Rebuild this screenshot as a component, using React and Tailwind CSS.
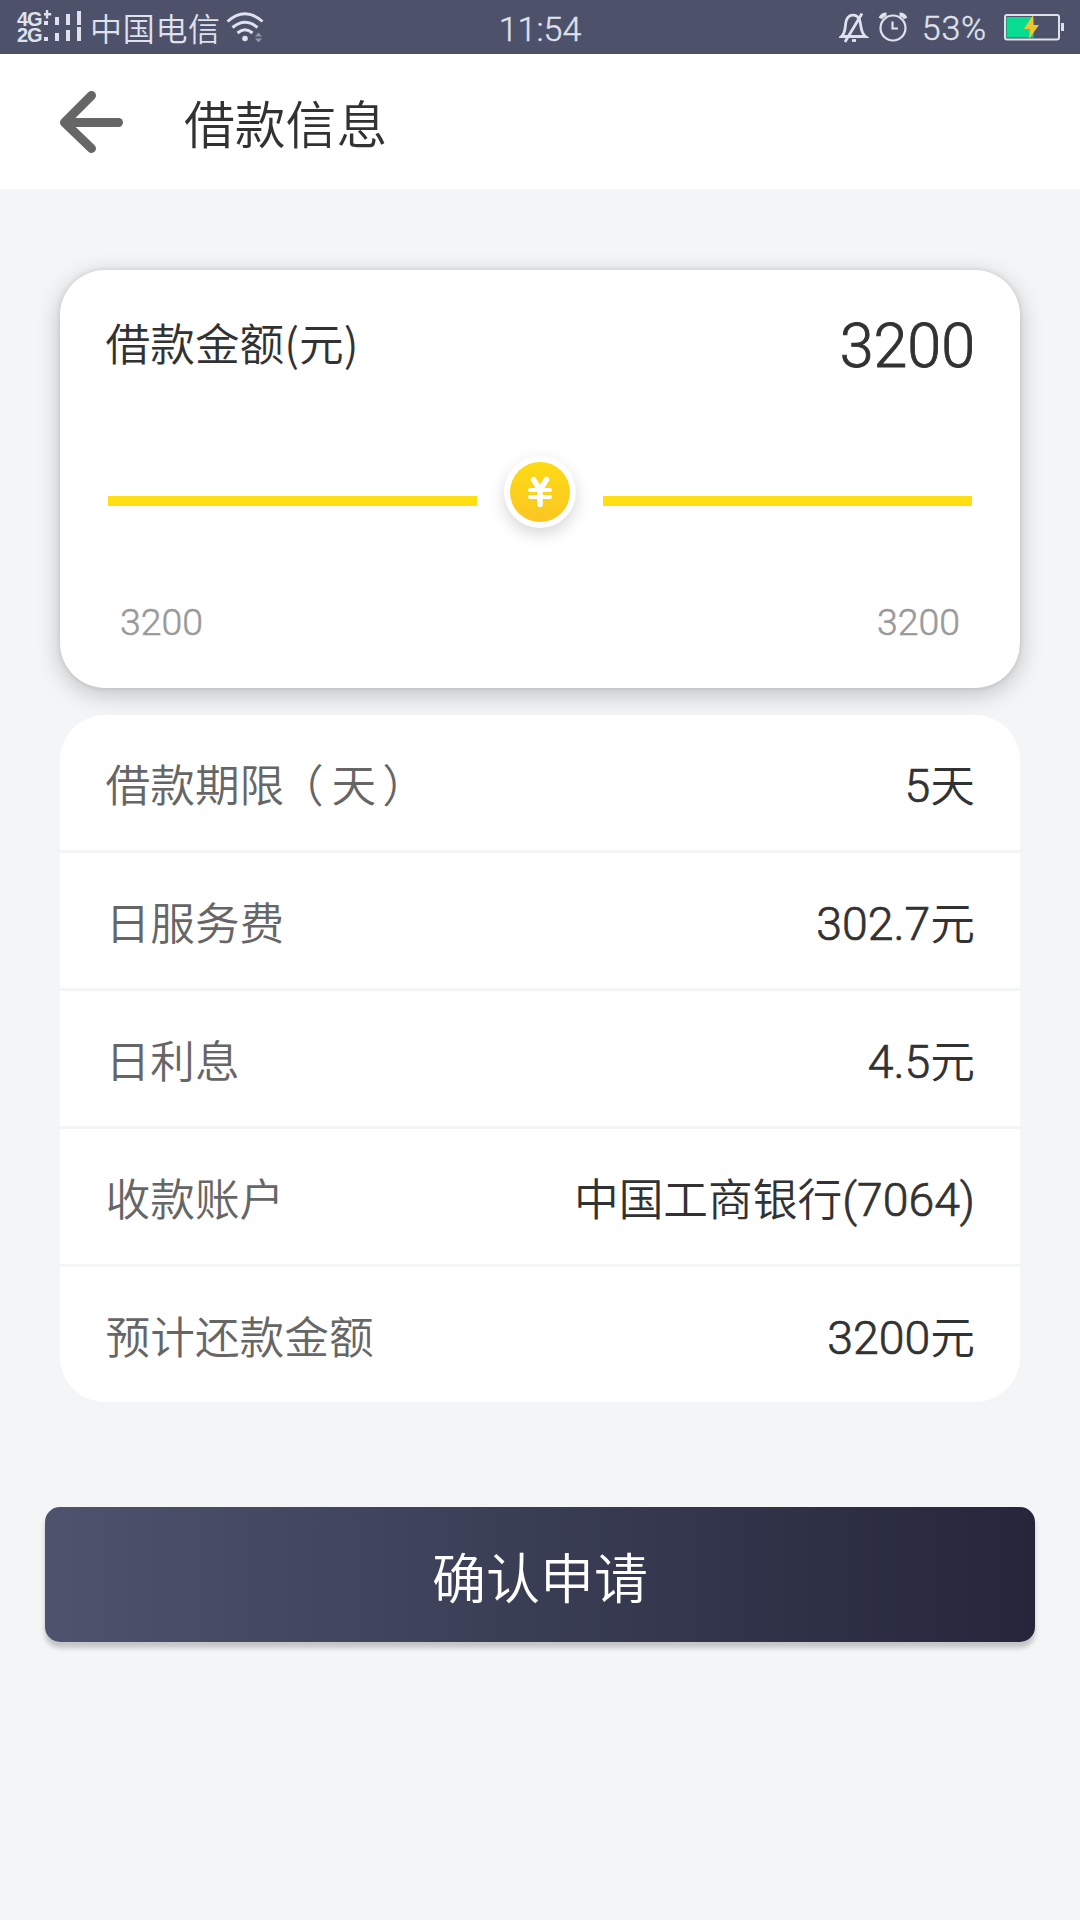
const rows = [
    { label: "借款期限", suffix: "天", value: "5", unit: "天" },
    { label: "日服务费", value: "302.7", unit: "元" },
    { label: "日利息", value: "4.5", unit: "元" },
    { label: "收款账户", prefix: "中国工商银行", value: "(7064)" },
    { label: "预计还款金额", value: "3200", unit: "元" },
];

function SignalBars() {
    return (
        <svg width="38" height="34" viewBox="0 0 38 34" fill="#dfe2ec">
            <path d="M1.800 0H4.200V3H7.200V5.400H4.200V8.400H1.800V5.400H-1.200V3H1.800z" />
            <rect x="0" y="11" width="4" height="4" />
            <rect x="11" y="7" width="4" height="8" />
            <rect x="22" y="4" width="4" height="11" />
            <rect x="33" y="1" width="4" height="14" />
            <rect x="0" y="27" width="4" height="4" />
            <rect x="11" y="23" width="4" height="8" />
            <rect x="22" y="20" width="4" height="11" />
            <rect x="33" y="17" width="4" height="14" />
        </svg>
    );
}

function WifiIcon() {
    return (
        <svg width="38" height="32" viewBox="0 0 38 32" fill="none" stroke="#dfe2ec" strokeWidth="3">
            <path d="M1.500 10.500Q19 -5 36.500 10.500" />
            <path d="M6.500 16.500Q19 6 31.500 16.500" />
            <path d="M11.500 22Q19 15.500 26.500 22" />
            <circle cx="19" cy="27.500" r="2.800" fill="#dfe2ec" stroke="none" />
            <path d="M29 25.500l3.500-4 3.500 4zM29 27.500l3.500 4 3.500-4z" fill="#9297a9" stroke="none" />
        </svg>
    );
}

function MuteIcon() {
    return (
        <svg width="30" height="31" viewBox="0 0 30 31" fill="none" stroke="#dfe2ec" strokeWidth="2.800">
            <path d="M2.500 24.500C7.500 20 5.500 13 7.500 8C10 1.500 18 1.500 20.500 8C22.500 13 21 20 26.500 24.500z" />
            <path d="M23 1.500L6 30" />
            <path d="M13 28.500H17" />
        </svg>
    );
}

function AlarmIcon() {
    return (
        <svg width="30" height="30" viewBox="0 0 30 30" fill="none" stroke="#dfe2ec" strokeWidth="2.200">
            <circle cx="15" cy="16" r="12.500" />
            <path d="M14.500 9.500V16.500H20" />
            <path d="M2.500 6.500Q4 2.500 8.500 2.500M21.500 2.500Q26 2.500 27.500 6.500" strokeWidth="4" />
        </svg>
    );
}

function BatteryIcon() {
    return (
        <svg width="60" height="27" viewBox="0 0 60 27">
            <rect x="1" y="1" width="54" height="24.500" rx="2" fill="none" stroke="#dfe2ec" strokeWidth="2" />
            <rect x="2.500" y="3" width="27" height="20.500" fill="#08dc90" />
            <rect x="57" y="9" width="3" height="8" fill="#dfe2ec" />
            <path d="M29 1L20 15H26L25 25L35 11H29.500z" fill="#edc531" />
        </svg>
    );
}

function StatusBar() {
    return (
        <div className="grid h-[54px] grid-cols-[1fr_auto_1fr] items-center bg-[#4d526a] text-[32px] leading-none text-[#dfe2ec]">
            <div className="flex items-center pl-[17px]">
                <div className="flex w-[27px] flex-col font-['Liberation_Sans',sans-serif] text-[20px] leading-[16px] font-bold tracking-[-1px]">
                    <span>4G</span>
                    <span>2G</span>
                </div>
                <SignalBars />
                <span className="ml-[8px] tracking-[0.7px]">中国电信</span>
                <span className="ml-[5px]">
                    <WifiIcon />
                </span>
            </div>
            <span className="pt-[4px] font-['Roboto',sans-serif] text-[34px] font-light [-webkit-text-stroke:0.4px]">11:54</span>
            <div className="flex items-center justify-end pr-[16px]">
                <MuteIcon />
                <span className="ml-[9px]">
                    <AlarmIcon />
                </span>
                <span className="ml-[14px] pt-[1px] font-['Roboto',sans-serif] text-[34px] font-light tracking-[0.8px] [-webkit-text-stroke:0.4px]">
                    53%
                </span>
                <span className="ml-[17px]">
                    <BatteryIcon />
                </span>
            </div>
        </div>
    );
}

function Header() {
    return (
        <header className="flex h-[135px] items-center bg-white pl-[60px]">
            <svg width="64" height="64" viewBox="0 0 64 64" fill="none" stroke="#666666" strokeWidth="9" strokeLinecap="round">
                <path d="M31.500 5.500L4.500 32.500L31.500 58.500" strokeLinejoin="round" />
                <path d="M8 32.500H58.500" />
            </svg>
            <h1 className="ml-[60px] pt-[1px] text-[50.8px] leading-none text-[#323232]">借款信息</h1>
        </header>
    );
}

function AmountCard() {
    return (
        <section className="flex h-[418px] flex-col rounded-[45px] bg-white shadow-[0_6px_24px_rgba(0,0,0,0.22),0_0_5px_rgba(0,0,0,0.12)]">
            <div className="flex h-[150px] items-center justify-between pr-[45px] pl-[45.5px] text-[#323232]">
                <span className="pb-[6px] text-[44.7px] leading-none">借款金额(元)</span>
                <span className="pt-[2px] font-['Roboto',sans-serif] text-[61px] leading-none font-light [-webkit-text-stroke:0.9px]">
                    3200
                </span>
            </div>

            {/* Slider */}
            <div className="flex h-[162px] items-center justify-between px-[48px]">
                <span className="h-[10px] w-[369px] bg-[#ffdf12]" />
                <span className="mb-[18px] flex size-[72px] items-center justify-center rounded-full bg-white shadow-[0_6px_16px_rgba(0,0,0,0.16)]">
                    <svg width="60" height="60" viewBox="0 0 60 60">
                        <defs>
                            <linearGradient id="coin" x1="0" y1="0" x2="0" y2="1">
                                <stop offset="0" stopColor="#fddb14" />
                                <stop offset="1" stopColor="#fbc522" />
                            </linearGradient>
                        </defs>
                        <circle cx="30" cy="30" r="30" fill="url(#coin)" />
                        <g fill="none" stroke="#ffffff" strokeLinecap="round">
                            <path d="M23.500 17.500L30 28L36.500 17.500M30 28V42.500" strokeWidth="5.500" />
                            <path d="M20 28H40M20 35H40" strokeWidth="4" />
                        </g>
                    </svg>
                </span>
                <span className="h-[10px] w-[369px] bg-[#ffdf12]" />
            </div>

            <div className="flex justify-between px-[60px] pt-[22px] font-['Roboto',sans-serif] text-[37.400px] leading-none font-light text-[#999999] [-webkit-text-stroke:0.5px]">
                <span>3200</span>
                <span>3200</span>
            </div>
        </section>
    );
}

function InfoList() {
    return (
        <section className="mt-[27px] flex flex-col gap-[3px]">
            {rows.map((row) => (
                <div
                    key={row.label}
                    className="flex h-[135px] items-center justify-between bg-white pt-[2px] pr-[45px] pl-[45.5px] text-[44.7px] leading-none first:rounded-t-[45px] last:rounded-b-[45px]"
                >
                    <span className="text-[#666666]">
                        {row.label}
                        {row.suffix && (
                            <>
                                <span className="mr-[8px] ml-[17px] [font-feature-settings:'halt']">（</span>
                                {row.suffix}
                                <span className="ml-[6px] [font-feature-settings:'halt']">）</span>
                            </>
                        )}
                    </span>
                    <span className="pt-[3px] text-[#323232]">
                        {row.prefix}
                        <span className="font-['Roboto',sans-serif] text-[46.400px] font-light [-webkit-text-stroke:0.7px]">
                            {row.value}
                        </span>
                        {row.unit}
                    </span>
                </div>
            ))}
        </section>
    );
}

export default function App() {
    return (
        <div className="min-h-[1920px] w-[1080px] bg-[#f3f5f7] font-['Noto_Sans_CJK_SC',sans-serif] font-[350]">
            <StatusBar />
            <Header />
            <main className="px-[60px] pt-[81px]">
                <AmountCard />
                <InfoList />
            </main>
            <div className="px-[45px] pt-[105px]">
                <button className="h-[135px] w-full rounded-[15px] bg-linear-to-r from-[#4e536e] via-[#393d54] to-[#26263b] pt-[2px] text-[54px] leading-none text-white shadow-[0_6px_5px_rgba(0,0,0,0.2)]">
                    确认申请
                </button>
            </div>
        </div>
    );
}
